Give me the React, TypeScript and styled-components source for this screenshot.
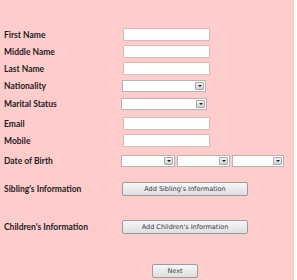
import React from 'react';
import styled, { createGlobalStyle } from 'styled-components';

const GlobalStyle = createGlobalStyle`
  html, body {
    margin: 0;
    padding: 0;
    background: #ffffff;
  }
`

const Page = styled.form`
  width: 294px;
  height: 280px;
  box-sizing: border-box;
  background: #ffcccc;
  padding: 28px 0 0 4px;
  font-family: "Lato", "Open Sans", sans-serif;
`

const Row = styled.div<{ $top?: number }>`
  display: flex;
  align-items: center;
  height: 13px;
  margin-top: ${p => p.$top ?? 4}px;
`

const Label = styled.label`
  width: 117px;
  flex: none;
  font-size: 8.5px;
  font-weight: 700;
  color: #1c1c24;
  white-space: nowrap;
`

const TextBox = styled.input`
  box-sizing: border-box;
  width: 87px;
  height: 13px;
  margin: 0 0 0 2px;
  padding: 0;
  border: 1px solid #dcb8b8;
  border-radius: 1px;
  background: #fff;
  outline: 0;
`

const SelectBox = styled.div<{ $w: number; $left?: number }>`
  display: flex;
  align-items: center;
  box-sizing: border-box;
  width: ${p => p.$w}px;
  height: 12px;
  margin-left: ${p => p.$left ?? 0}px;
  border: 1px solid #b4b4b4;
  background: #fff;
`

const Arrow = styled.span`
  margin-left: auto;
  margin-right: 1px;
  width: 9px;
  height: 8px;
  box-sizing: border-box;
  border: 1px solid #a8a8a8;
  border-radius: 1px;
  background: linear-gradient(#f4f4f4, #d0d0d0);
  display: flex;
  align-items: center;
  justify-content: center;
  &::after {
    content: "";
    border-left: 2px solid transparent;
    border-right: 2px solid transparent;
    border-top: 2px solid #222;
  }
`

const Action = styled.button<{ $w: number; $left?: number }>`
  box-sizing: border-box;
  width: ${p => p.$w}px;
  height: 14px;
  margin-left: ${p => p.$left ?? 1}px;
  padding: 0;
  border: 1px solid #9c9c9c;
  border-radius: 2px;
  background: linear-gradient(#f7f7f7, #dedede);
  font-family: "DejaVu Sans", sans-serif;
  font-size: 6.5px;
  color: #3a3a4a;
  cursor: pointer;
`

const Footer = styled.div`
  display: flex;
  margin-top: 31px;
  padding-left: 147px;
`

const Select: React.FC<{ w: number; left?: number }> = ({ w, left }) => (
  <SelectBox $w={w} $left={left}>
    <Arrow />
  </SelectBox>
)

export default function App() {
  return (
    <Page>
      <GlobalStyle />
      <Row $top={0}><Label>First Name</Label><TextBox /></Row>
      <Row><Label>Middle Name</Label><TextBox /></Row>
      <Row><Label>Last Name</Label><TextBox /></Row>
      <Row><Label>Nationality</Label><Select w={84} left={1} /></Row>
      <Row $top={5}><Label>Marital Status</Label><Select w={86} /></Row>
      <Row $top={7}><Label>Email</Label><TextBox /></Row>
      <Row><Label>Mobile</Label><TextBox /></Row>
      <Row $top={7}>
        <Label>Date of Birth</Label>
        <Select w={54} />
        <Select w={53} left={2} />
        <Select w={52} left={2} />
      </Row>
      <Row $top={15}><Label>Sibling's Information</Label><Action $w={126}>Add Sibling's Information</Action></Row>
      <Row $top={25}><Label>Children's Information</Label><Action $w={126}>Add Children's Information</Action></Row>
      <Footer><Action $w={46}>Next</Action></Footer>
    </Page>
  );
}
